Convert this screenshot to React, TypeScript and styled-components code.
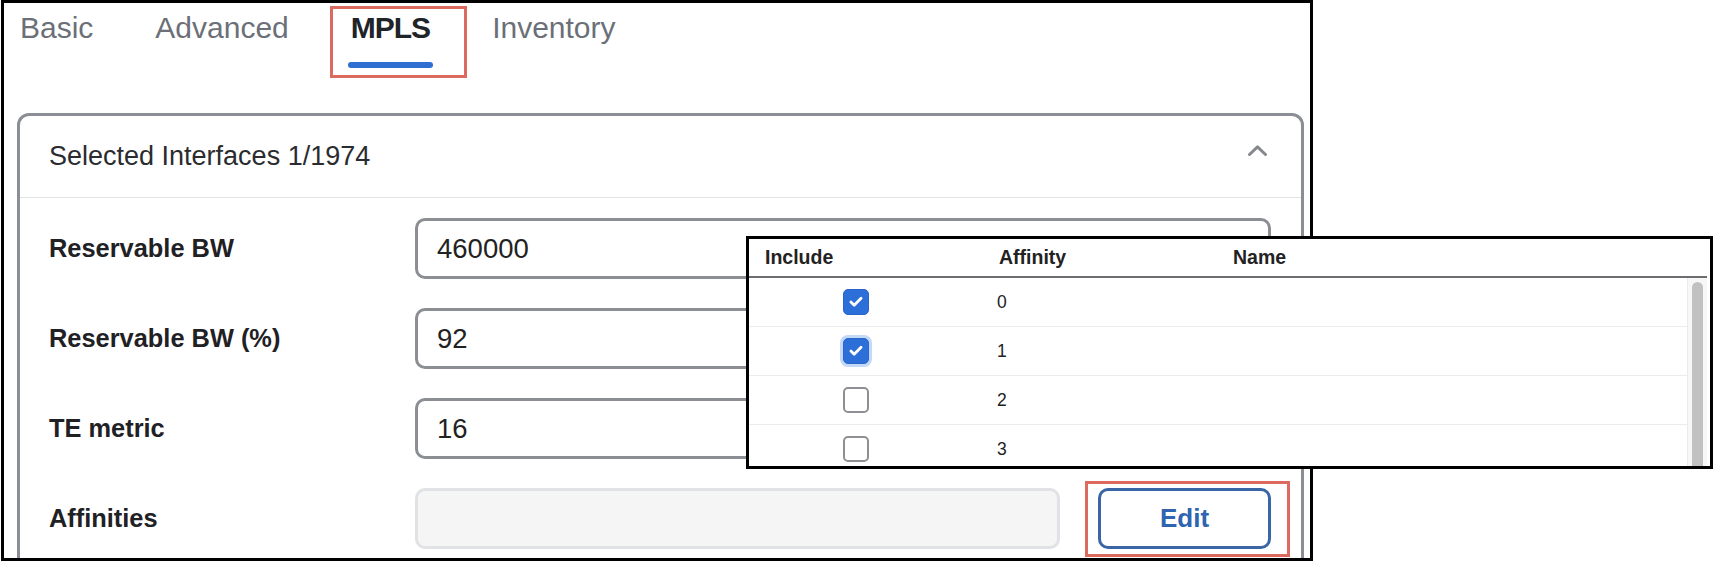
import React from "react";
import styled, { createGlobalStyle, css } from "styled-components";

const GlobalStyle = createGlobalStyle`
  html, body {
    margin: 0;
    padding: 0;
    background: #ffffff;
    overflow: hidden;
  }
  body {
    font-family: "Liberation Sans", Arial, sans-serif;
    color: #222;
  }
  * { box-sizing: border-box; }
`;

const FONT = `"Liberation Sans", Arial, sans-serif`;

const Page = styled.div`
  position: relative;
  width: 1715px;
  height: 564px;
  padding-left: 1px;
`;

const Frame = styled.div`
  width: 1312px;
  height: 561px;
  border: 3px solid #000;
  overflow: hidden;
  display: flex;
  flex-direction: column;
  background: #fff;
`;

const TabBar = styled.div`
  display: flex;
  align-items: flex-start;
  height: 110px;
  padding: 7px 0 0 16px;
  flex-shrink: 0;
`;

const annotation = css`
  content: "";
  position: absolute;
  border: 3px solid #dc6a5e;
  pointer-events: none;
`;

const Tab = styled.div<{ $active?: boolean; $annotated?: boolean }>`
  position: relative;
  display: flex;
  flex-direction: column;
  align-items: stretch;
  margin-right: 62px;
  font-family: ${FONT};
  font-size: 30px;
  line-height: 35px;
  font-weight: ${(p) => (p.$active ? 700 : 400)};
  letter-spacing: ${(p) => (p.$active ? "-1px" : "0")};
  color: ${(p) => (p.$active ? "#202328" : "#6b7078")};
  white-space: nowrap;
  ${(p) =>
    p.$annotated &&
    css`
      &::after {
        ${annotation};
        left: -21px;
        right: -37px;
        top: -4px;
        bottom: -10px;
      }
    `}
`;

const TabUnderline = styled.div<{ $active?: boolean }>`
  height: 6px;
  margin: 17px -3px 0;
  border-radius: 3px;
  background: ${(p) => (p.$active ? "#2f6fd1" : "transparent")};
`;

const Panel = styled.div`
  margin: 0 6px 0 13px;
  flex: 1 0 auto;
  height: 600px;
  border: 3px solid #8b8f95;
  border-radius: 12px;
  display: flex;
  flex-direction: column;
`;

const PanelHeader = styled.div`
  height: 82px;
  display: flex;
  align-items: center;
  justify-content: space-between;
  padding: 0 34px 0 29px;
  border-bottom: 1px solid #e2e3e5;
  flex-shrink: 0;
`;

const PanelTitle = styled.div`
  font-family: ${FONT};
  font-size: 27px;
  color: #2a2c2f;
`;

const CollapseIcon = styled.span`
  display: inline-flex;
  margin-bottom: 13px;
`;

const FormBody = styled.div`
  display: flex;
  flex-direction: column;
  gap: 29px;
  padding: 20px 30px 0 29px;
`;

const FieldRow = styled.div`
  display: grid;
  grid-template-columns: 366px 1fr;
  align-items: center;
`;

const Label = styled.div`
  font-family: ${FONT};
  font-size: 25.4px;
  font-weight: 700;
  color: #1f2124;
`;

const TextInput = styled.input`
  width: 100%;
  height: 61px;
  border: 3px solid #8b8e93;
  border-radius: 10px;
  padding: 0 19px;
  font-family: ${FONT};
  font-size: 27.5px;
  color: #222;
  background: #fff;
  outline: none;
`;

const ControlGroup = styled.div`
  display: flex;
  gap: 38px;
  align-items: center;
`;

const DisabledInput = styled.div`
  flex: 1;
  height: 61px;
  border: 3px solid #e1e2e5;
  border-radius: 10px;
  background: #f5f5f6;
`;

const EditButton = styled.button<{ $annotated?: boolean }>`
  position: relative;
  width: 173px;
  height: 61px;
  border: 3px solid #3b66a6;
  border-radius: 10px;
  background: #fff;
  font-family: ${FONT};
  font-size: 26px;
  font-weight: 700;
  color: #2f64b0;
  cursor: pointer;
  ${(p) =>
    p.$annotated &&
    css`
      &::after {
        ${annotation};
        left: -16px;
        right: -22px;
        top: -10px;
        bottom: -11px;
      }
    `}
`;

const Popup = styled.div`
  position: absolute;
  left: 746px;
  top: 236px;
  width: 967px;
  height: 233px;
  border: 3px solid #000;
  background: #fff;
  display: flex;
  flex-direction: column;
  padding-right: 3px;
`;

const columns = css`
  display: grid;
  grid-template-columns: 234px 234px 1fr;
  align-items: center;
`;

const PopupHeader = styled.div`
  ${columns};
  height: 39px;
  border-bottom: 2px solid #6b6d71;
  flex-shrink: 0;
`;

const HeaderCell = styled.div`
  padding-left: 16px;
  font-family: ${FONT};
  font-size: 19.5px;
  font-weight: 700;
  color: #222;
`;

const PopupBody = styled.div`
  flex: 1;
  display: flex;
  overflow: hidden;
`;

const Rows = styled.div`
  flex: 1;
  display: flex;
  flex-direction: column;
`;

const Row = styled.div`
  ${columns};
  height: 49px;
  flex-shrink: 0;
  border-bottom: 1px solid #ececec;
`;

const CheckCell = styled.div`
  padding-left: 94px;
  display: flex;
  align-items: center;
`;

const ValueCell = styled.div`
  padding-left: 14px;
  font-family: ${FONT};
  font-size: 17.5px;
  color: #222;
`;

const ScrollTrack = styled.div`
  width: 20px;
  background: #f7f7f7;
  border-left: 1px solid #ebebeb;
  padding: 4px 4px 0 4px;
  display: flex;
`;

const ScrollThumb = styled.div`
  flex: 1;
  border-radius: 6px;
  background: #c1c1c1;
  margin-bottom: -10px;
`;

const CheckBox = styled.span<{ $checked?: boolean; $focused?: boolean }>`
  width: 26px;
  height: 26px;
  border-radius: 5px;
  display: inline-flex;
  align-items: center;
  justify-content: center;
  ${(p) =>
    p.$checked
      ? css`
          background: #2d6fd8;
          border: 1px solid #2a66c9;
        `
      : css`
          background: #fff;
          border: 2.5px solid #8e9094;
        `}
  ${(p) =>
    p.$focused &&
    css`
      box-shadow: 0 0 0 3px #c4d9f6;
    `}
`;

const Check = () => (
  <svg width="26" height="26" viewBox="0 0 26 26" fill="none">
    <polyline
      points="7.5,13 11,16.5 18.5,9"
      stroke="#fff"
      strokeWidth="3"
      strokeLinecap="round"
      strokeLinejoin="round"
    />
  </svg>
);

const ChevronUp = () => (
  <svg width="19" height="11" viewBox="0 0 19 11" fill="none">
    <polyline
      points="1.5,9.5 9.5,1.8 17.5,9.5"
      stroke="#85888d"
      strokeWidth="3"
      strokeLinecap="round"
      strokeLinejoin="round"
    />
  </svg>
);

const tabs = [
  { label: "Basic" },
  { label: "Advanced" },
  { label: "MPLS", active: true },
  { label: "Inventory" },
];

const fields = [
  { label: "Reservable BW", value: "460000" },
  { label: "Reservable BW (%)", value: "92" },
  { label: "TE metric", value: "16" },
];

const affinities = [
  { id: 0, checked: true },
  { id: 1, checked: true, focused: true },
  { id: 2, checked: false },
  { id: 3, checked: false },
];

export default function App() {
  return (
    <>
      <GlobalStyle />
      <Page>
        <Frame>
          <TabBar>
            {tabs.map((t) => (
              <Tab key={t.label} $active={t.active} $annotated={t.active}>
                {t.label}
                <TabUnderline $active={t.active} />
              </Tab>
            ))}
          </TabBar>
          <Panel>
            <PanelHeader>
              <PanelTitle>Selected Interfaces 1/1974</PanelTitle>
              <CollapseIcon>
                <ChevronUp />
              </CollapseIcon>
            </PanelHeader>
            <FormBody>
              {fields.map((f) => (
                <FieldRow key={f.label}>
                  <Label>{f.label}</Label>
                  <TextInput defaultValue={f.value} readOnly />
                </FieldRow>
              ))}
              <FieldRow>
                <Label>Affinities</Label>
                <ControlGroup>
                  <DisabledInput />
                  <EditButton $annotated>Edit</EditButton>
                </ControlGroup>
              </FieldRow>
            </FormBody>
          </Panel>
        </Frame>
        <Popup>
          <PopupHeader>
            <HeaderCell>Include</HeaderCell>
            <HeaderCell>Affinity</HeaderCell>
            <HeaderCell>Name</HeaderCell>
          </PopupHeader>
          <PopupBody>
            <Rows>
              {affinities.map((a) => (
                <Row key={a.id}>
                  <CheckCell>
                    <CheckBox $checked={a.checked} $focused={a.focused}>
                      {a.checked && <Check />}
                    </CheckBox>
                  </CheckCell>
                  <ValueCell>{a.id}</ValueCell>
                  <div />
                </Row>
              ))}
            </Rows>
            <ScrollTrack>
              <ScrollThumb />
            </ScrollTrack>
          </PopupBody>
        </Popup>
      </Page>
    </>
  );
}
